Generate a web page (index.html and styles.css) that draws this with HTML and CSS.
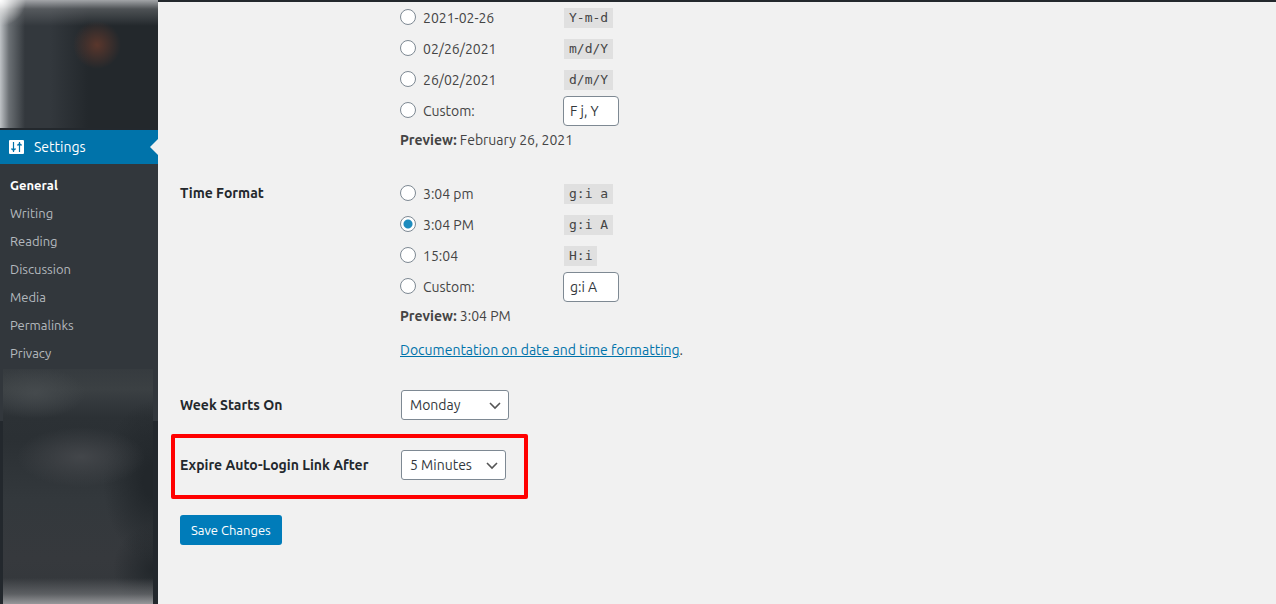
FILE: index.html
```
<!DOCTYPE html>
<html lang="en">
<head>
    <meta charset="UTF-8">
    <meta name="viewport" content="width=device-width, initial-scale=1.0">
    <title>General Settings</title>
    <link rel="stylesheet" href="styles.css">
</head>
<body>
    <!-- Admin Menu -->
    <nav class="admin-menu">
        <div class="menu-blur-top"></div>
        <a class="menu-current" href="#">
            <svg class="menu-icon" width="15" height="14" viewBox="0 0 15 14">
                <rect width="15" height="14" rx="1" fill="#fff"/>
                <path d="M4.500 2v10M2 9h5M10.500 2v10M8 5h5" stroke="#0073aa" stroke-width="1.200" fill="none"/>
                <path d="M2.500 9h4l-2 2.500zM8.500 5h4l-2-2.500z" fill="#0073aa"/>
            </svg>
            Settings
        </a>
        <ul class="submenu">
            <li><a class="current" href="#">General</a></li>
            <li><a href="#">Writing</a></li>
            <li><a href="#">Reading</a></li>
            <li><a href="#">Discussion</a></li>
            <li><a href="#">Media</a></li>
            <li><a href="#">Permalinks</a></li>
            <li><a href="#">Privacy</a></li>
        </ul>
        <div class="menu-blur-bottom"></div>
    </nav>

    <!-- Settings Form -->
    <main class="content">
        <form class="settings-form">
            <div class="form-row date-row">
                <div class="row-title"></div>
                <div class="row-fields">
                    <div class="option">
                        <input type="radio" name="date_format" id="date1">
                        <label for="date1">2021-02-26</label>
                        <code>Y-m-d</code>
                    </div>
                    <div class="option">
                        <input type="radio" name="date_format" id="date2">
                        <label for="date2">02/26/2021</label>
                        <code>m/d/Y</code>
                    </div>
                    <div class="option">
                        <input type="radio" name="date_format" id="date3">
                        <label for="date3">26/02/2021</label>
                        <code>d/m/Y</code>
                    </div>
                    <div class="option">
                        <input type="radio" name="date_format" id="dateCustom">
                        <label for="dateCustom">Custom:</label>
                        <input type="text" class="small-text" aria-label="Custom date format" value="F j, Y">
                    </div>
                    <p class="preview"><strong>Preview:</strong> February 26, 2021</p>
                </div>
            </div>

            <div class="form-row time-row">
                <div class="row-title">Time Format</div>
                <div class="row-fields">
                    <div class="option">
                        <input type="radio" name="time_format" id="time1">
                        <label for="time1">3:04 pm</label>
                        <code>g:i a</code>
                    </div>
                    <div class="option">
                        <input type="radio" name="time_format" id="time2" checked>
                        <label for="time2">3:04 PM</label>
                        <code>g:i A</code>
                    </div>
                    <div class="option">
                        <input type="radio" name="time_format" id="time3">
                        <label for="time3">15:04</label>
                        <code>H:i</code>
                    </div>
                    <div class="option">
                        <input type="radio" name="time_format" id="timeCustom">
                        <label for="timeCustom">Custom:</label>
                        <input type="text" class="small-text" aria-label="Custom time format" value="g:i A">
                    </div>
                    <p class="preview"><strong>Preview:</strong> 3:04 PM</p>
                    <p class="doc-link"><a href="#">Documentation on date and time formatting</a>.</p>
                </div>
            </div>

            <div class="form-row week-row">
                <label class="row-title" for="weekStart">Week Starts On</label>
                <div class="select-wrap">
                    <select id="weekStart" class="select-day">
                        <option>Sunday</option>
                        <option selected>Monday</option>
                        <option>Saturday</option>
                    </select>
                    <svg class="chevron" width="12" height="8" viewBox="0 0 12 8"><path d="M1 1l5 5 5-5" fill="none" stroke="#555" stroke-width="1.600"/></svg>
                </div>
            </div>

            <div class="form-row highlight">
                <label class="row-title" for="expireAfter">Expire Auto-Login Link After</label>
                <div class="select-wrap">
                    <select id="expireAfter" class="select-minutes">
                        <option selected>5 Minutes</option>
                        <option>10 Minutes</option>
                    </select>
                    <svg class="chevron" width="12" height="8" viewBox="0 0 12 8"><path d="M1 1l5 5 5-5" fill="none" stroke="#555" stroke-width="1.600"/></svg>
                </div>
            </div>

            <button type="submit" class="save-button">Save Changes</button>
        </form>
    </main>
</body>
</html>
```
FILE: styles.css
```
* {
    box-sizing: border-box;
}

body {
    margin: 0;
    display: flex;
    min-height: 100vh;
    background-color: #f1f1f1;
    color: #444;
    font-family: Ubuntu, "Noto Sans", sans-serif;
    font-size: 14px;
    line-height: 20px;
}

/* Admin Menu */
.admin-menu {
    position: relative;
    flex: none;
    width: 158px;
    background-color: #23282d;
}

.menu-blur-top {
    height: 128px;
    margin-bottom: 2px;
    background:
        radial-gradient(circle at 97px 45px, rgba(96, 56, 44, 0.9), rgba(96, 56, 44, 0) 24px),
        radial-gradient(circle at 0 0, #fff, rgba(255, 255, 255, 0) 26px),
        linear-gradient(to bottom, rgba(176, 178, 181, 0.9), rgba(120, 123, 126, 0.5) 9px, rgba(35, 40, 45, 0) 26px),
        linear-gradient(to right, #bfc3c6, rgba(130, 135, 139, 0.7) 9px, rgba(50, 55, 60, 0) 25px),
        linear-gradient(to right, #33383d 50px, #23282c 88px);
}

.menu-current {
    position: relative;
    display: flex;
    align-items: center;
    gap: 10px;
    height: 34px;
    padding-left: 9px;
    background-color: #0073aa;
    color: #fff;
    text-decoration: none;
}

.menu-current::after {
    content: "";
    position: absolute;
    right: 0;
    top: 9px;
    border: 8px solid transparent;
    border-left-width: 0;
    border-right-color: #f1f1f1;
}

.submenu {
    margin: 0;
    padding: 7px 0 54px;
    list-style: none;
    background-color: #32373c;
    font-size: 13px;
}

.submenu a {
    display: block;
    padding: 4px 10px;
    color: #b4b9be;
    text-decoration: none;
}

.submenu .current {
    color: #fff;
    font-weight: bold;
}

.menu-blur-bottom {
    position: absolute;
    top: 369px;
    bottom: 0;
    left: 3px;
    right: 5px;
    background:
        linear-gradient(to top, #96979a, rgba(120, 122, 125, 0.6) 10px, rgba(50, 55, 60, 0) 26px),
        radial-gradient(ellipse 50px 26px at 32px 24px, rgba(72, 77, 80, 0.8), rgba(60, 65, 68, 0)),
        radial-gradient(ellipse 64px 30px at 78px 88px, #43464a, rgba(67, 70, 74, 0)),
        radial-gradient(ellipse 50px 80px at 150px 112px, #22272b 20%, rgba(34, 39, 43, 0)),
        radial-gradient(ellipse 40px 44px at 150px 200px, #22272b, rgba(34, 39, 43, 0)),
        linear-gradient(to bottom, #363b3f, #3b4043 20px, #2c3135 48px, #2b3034 70px, #33383c 130px, #36393d 190px, #33373b);
}

/* Content */
.content {
    flex: 1;
    border-top: 2px solid #23282d;
    padding: 0 22px 20px;
}

.settings-form {
    display: flex;
    flex-direction: column;
    align-items: flex-start;
}

.form-row {
    display: flex;
}

.row-title {
    width: 220px;
    color: #23282d;
    font-weight: bold;
    line-height: 30px;
}

.option {
    display: flex;
    align-items: center;
    height: 31px;
}

.option label {
    width: 140px;
}

.option code {
    margin-left: 1px;
    padding: 0 5px;
    background-color: #e0e0e0;
    font-family: "DejaVu Sans Mono", monospace;
    font-size: 13px;
}

input[type="radio"] {
    appearance: none;
    width: 16px;
    height: 16px;
    margin: 0 7px 2px 0;
    border: 1px solid #7e8993;
    border-radius: 50%;
    background-color: #fff;
}

input[type="radio"]:checked {
    background-image: radial-gradient(circle, #1e8cbe 4px, #fff 5px);
}

.small-text {
    width: 56px;
    height: 30px;
    padding: 0 6px;
    border: 1px solid #7e8993;
    border-radius: 4px;
    background-color: #fff;
    color: #32373c;
    font: inherit;
}

.preview {
    margin: 0;
    line-height: 28px;
}

.date-row {
    margin-bottom: 24px;
}

.doc-link {
    margin: 10px 0 30px;
}

.doc-link a {
    color: #0073aa;
}

/* Selects */
.select-wrap {
    position: relative;
    margin-left: 1px;
}

.select-wrap select {
    appearance: none;
    height: 30px;
    padding: 0 8px;
    border: 1px solid #7e8993;
    border-radius: 3px;
    background-color: #fff;
    color: #32373c;
    font: inherit;
}

.select-day {
    width: 108px;
}

.select-minutes {
    width: 105px;
}

.chevron {
    position: absolute;
    right: 8px;
    top: 12px;
    pointer-events: none;
}

.highlight {
    margin: 14px 0 16px -9px;
    padding: 12px 18px 15px 5px;
    border: 4px solid #f00;
    border-radius: 2px;
}

.save-button {
    height: 30px;
    padding: 0 11px;
    border: none;
    border-radius: 3px;
    background-color: #007cba;
    color: #fff;
    font: inherit;
    font-size: 13px;
    cursor: pointer;
}
```
